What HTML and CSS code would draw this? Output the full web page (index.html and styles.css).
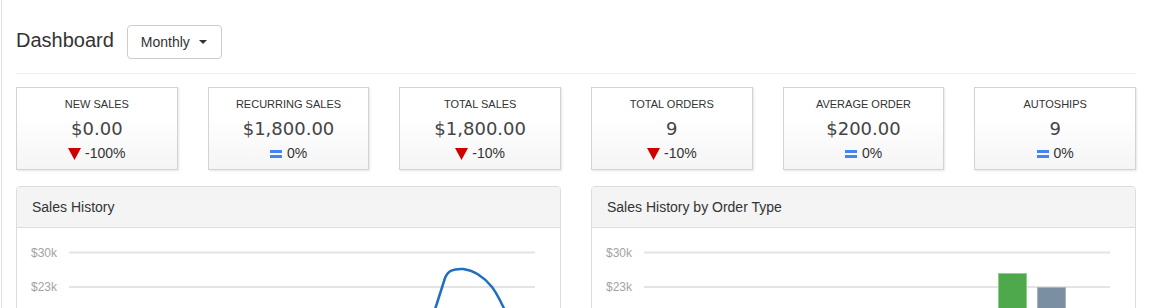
FILE: index.html
```html
<!DOCTYPE html>
<html lang="en">
<head>
  <meta charset="UTF-8">
  <meta name="viewport" content="width=device-width, initial-scale=1.0">
  <title>Dashboard</title>
  <link rel="stylesheet" href="styles.css">
</head>
<body>
  <div class="page">
    <div class="page-header">
      <h1>Dashboard</h1>
      <button class="dropdown" type="button">Monthly <span class="caret"></span></button>
    </div>
    <hr>

    <div class="stats">
      <div class="stat">
        <div class="stat-label">New Sales</div>
        <div class="stat-value">$0.00</div>
        <div class="stat-change"><svg class="down" width="13" height="12" viewBox="0 0 13 12"><polygon points="0,0 13,0 6.5,12"/></svg>-100%</div>
      </div>
      <div class="stat">
        <div class="stat-label">Recurring Sales</div>
        <div class="stat-value">$1,800.00</div>
        <div class="stat-change"><svg class="same" width="12" height="8" viewBox="0 0 12 8"><rect x="0" y="0" width="12" height="3"/><rect x="0" y="5" width="12" height="3"/></svg>0%</div>
      </div>
      <div class="stat">
        <div class="stat-label">Total Sales</div>
        <div class="stat-value">$1,800.00</div>
        <div class="stat-change"><svg class="down" width="13" height="12" viewBox="0 0 13 12"><polygon points="0,0 13,0 6.5,12"/></svg>-10%</div>
      </div>
      <div class="stat">
        <div class="stat-label">Total Orders</div>
        <div class="stat-value">9</div>
        <div class="stat-change"><svg class="down" width="13" height="12" viewBox="0 0 13 12"><polygon points="0,0 13,0 6.5,12"/></svg>-10%</div>
      </div>
      <div class="stat">
        <div class="stat-label">Average Order</div>
        <div class="stat-value">$200.00</div>
        <div class="stat-change"><svg class="same" width="12" height="8" viewBox="0 0 12 8"><rect x="0" y="0" width="12" height="3"/><rect x="0" y="5" width="12" height="3"/></svg>0%</div>
      </div>
      <div class="stat">
        <div class="stat-label">Autoships</div>
        <div class="stat-value">9</div>
        <div class="stat-change"><svg class="same" width="12" height="8" viewBox="0 0 12 8"><rect x="0" y="0" width="12" height="3"/><rect x="0" y="5" width="12" height="3"/></svg>0%</div>
      </div>
    </div>

    <div class="panels">
      <div class="panel">
        <div class="panel-heading">Sales History</div>
        <div class="panel-body">
          <svg class="chart" width="543" height="240" viewBox="0 0 543 240">
            <line class="grid" x1="52" y1="24.5" x2="518" y2="24.5"/>
            <line class="grid" x1="52" y1="59" x2="518" y2="59"/>
            <text class="axis" x="40" y="28.5">$30k</text>
            <text class="axis" x="40" y="63">$23k</text>
            <path class="line" d="M414,94 L428,50 C431,43 436,40.5 446,41 C456,42 467,49 475,59 C481,67 485,75 493,94"/>
          </svg>
        </div>
      </div>
      <div class="panel">
        <div class="panel-heading">Sales History by Order Type</div>
        <div class="panel-body">
          <svg class="chart" width="543" height="240" viewBox="0 0 543 240">
            <line class="grid" x1="52" y1="24.5" x2="518" y2="24.5"/>
            <line class="grid" x1="52" y1="59" x2="518" y2="59"/>
            <text class="axis" x="40" y="28.5">$30k</text>
            <text class="axis" x="40" y="63">$23k</text>
            <rect class="bar-green" x="406.5" y="45.5" width="28" height="200"/>
            <rect class="bar-grey" x="445.5" y="59.5" width="28" height="200"/>
          </svg>
        </div>
      </div>
    </div>
  </div>
</body>
</html>
```

FILE: styles.css
```css
* {
  box-sizing: border-box;
}

body {
  margin: 0;
  background: #fff;
  font-family: "Liberation Sans", Arial, sans-serif;
  font-size: 14px;
  color: #333;
}

.page {
  margin-left: 1px;
  border-left: 1px solid #e2e2e2;
  padding: 25px 15px 0 14px;
  min-height: 308px;
}

.page-header {
  display: flex;
  align-items: baseline;
  gap: 13px;
}

h1 {
  margin: 0;
  font-size: 20px;
  font-weight: normal;
  line-height: 1.1;
}

.dropdown {
  display: flex;
  align-items: center;
  gap: 8px;
  height: 34px;
  padding: 6px 14px 6px 13px;
  border: 1px solid #ccc;
  border-radius: 4px;
  background: #fff;
  font-family: inherit;
  font-size: 14px;
  line-height: 20px;
  color: #333;
}

.caret {
  display: inline-block;
  width: 0;
  height: 0;
  margin-left: 1px;
  border-top: 4px solid #333;
  border-left: 4px solid transparent;
  border-right: 4px solid transparent;
}

hr {
  margin: 14px 0 13px;
  border: 0;
  border-top: 1px solid #eee;
}

.stats {
  display: grid;
  grid-template-columns: repeat(6, 1fr);
  gap: 30px;
}

.stat {
  height: 83px;
  padding-top: 9px;
  border: 1px solid #d3d3d3;
  background: linear-gradient(#fff 35%, #f5f5f5);
  box-shadow: 1px 1px 2px rgba(0, 0, 0, 0.1);
  text-align: center;
}

.stat-label {
  font-size: 11px;
  line-height: 15px;
  text-transform: uppercase;
}

.stat-value {
  margin-top: 6px;
  font-family: "DejaVu Sans", Verdana, sans-serif;
  font-size: 18px;
  line-height: 22px;
  color: #444;
}

.stat-change {
  margin-top: 3px;
  font-size: 14px;
  line-height: 20px;
}

.stat-change svg {
  margin-right: 4px;
}

.down {
  vertical-align: -2px;
  fill: #c00;
}

.same {
  vertical-align: 0;
  margin-right: 5px !important;
  fill: #4285f4;
}

.panels {
  display: grid;
  grid-template-columns: 1fr 1fr;
  gap: 30px;
  margin-top: 16px;
}

.panel {
  border: 1px solid #ddd;
  border-radius: 4px;
  overflow: hidden;
}

.panel-heading {
  padding: 10px 15px;
  line-height: 20px;
  background: #f4f4f4;
  border-bottom: 1px solid #ddd;
}

.panel-body {
  height: 240px;
}

.chart {
  display: block;
}

.grid {
  stroke: #e4e4e4;
  stroke-width: 2;
}

.axis {
  font-family: "Liberation Sans", Arial, sans-serif;
  font-size: 12px;
  fill: #a3a3a3;
  text-anchor: end;
}

.line {
  fill: none;
  stroke: #1f6fbf;
  stroke-width: 2.5;
}

.bar-green {
  fill: #4ea84c;
  stroke: #8ccf89;
  stroke-width: 1;
}

.bar-grey {
  fill: #7b8fa3;
  stroke: #a6b4c2;
  stroke-width: 1;
}
```
